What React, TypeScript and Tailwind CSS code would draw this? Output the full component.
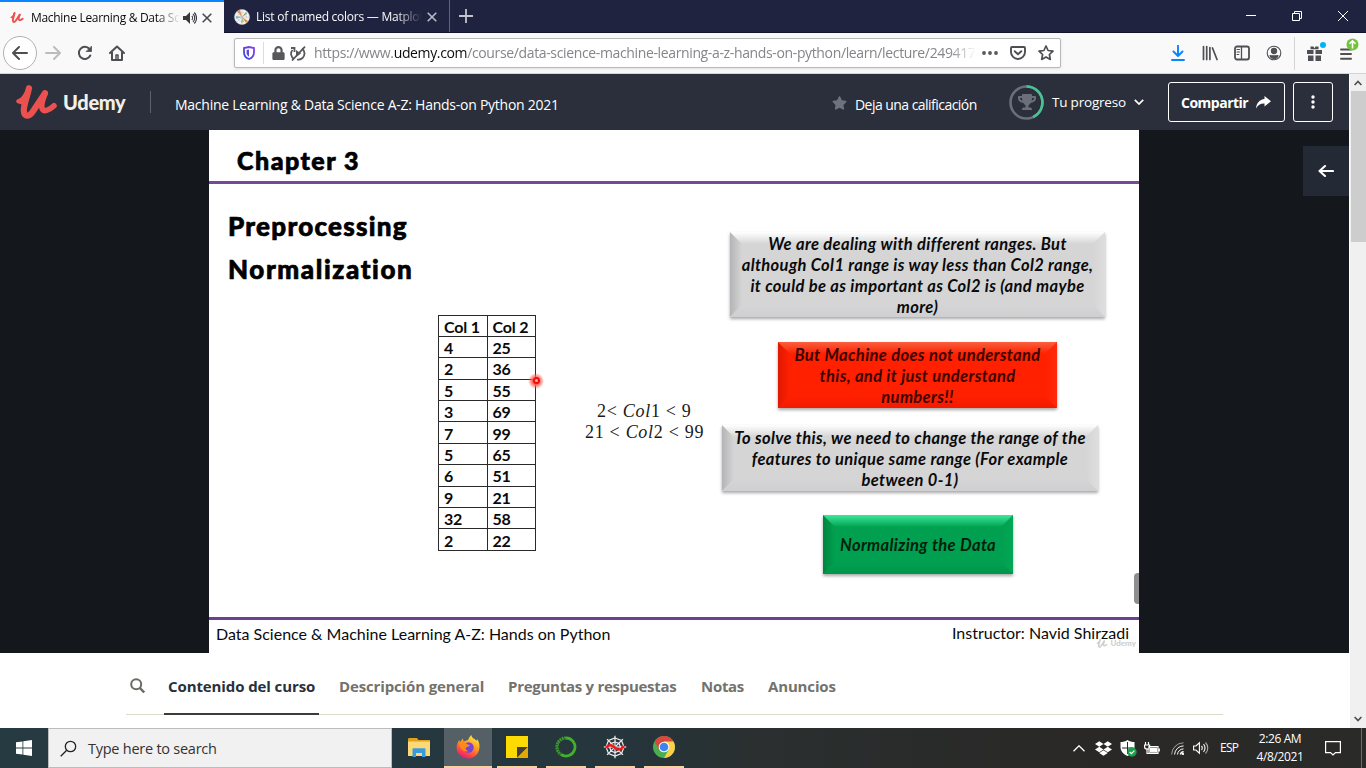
import React from "react";
import { FaStar, FaTrophy, FaLock, FaDropbox } from "react-icons/fa";

const sans = "font-['Open_Sans','Noto_Sans',sans-serif]";
const calibri = "font-['Lato','Noto_Sans',sans-serif]";

function UdemyMark({ className, color = "#eb524f" }: { className?: string; color?: string }) {
  return (
    <svg className={className} viewBox="0 0 41 34" fill="none" stroke={color} strokeLinecap="round" strokeLinejoin="round">
      <path d="M13 3.200C11.500 11 7.800 19 7.800 25.500C8 32.500 13 32 16.500 27L28.800 8.500" strokeWidth="6.200" />
      <path d="M29.200 8C27 14.500 24.800 19.500 26 23C27.500 27.500 33 25.500 38 20.800" strokeWidth="5.600" />
      <path d="M2.200 16.300C7 15 10.500 8.500 12.500 3.500L8 18z" strokeWidth="4" fill={color} />
    </svg>
  );
}

function Close({ className }: { className?: string }) {
  return (
    <svg className={className} width="10" height="10" viewBox="0 0 10 10" stroke="currentColor" strokeWidth="1.6">
      <path d="M.7.7l8.600 8.600M9.300.7L.7 9.300" />
    </svg>
  );
}

function TabBar() {
  return (
    <div className={`flex h-[33px] shrink-0 bg-[#20233f] border-b border-[#12142b] ${sans}`}>
      <div className="flex h-[33px] w-[224px] items-center border-t-2 border-[#0a84ff] bg-[#f9f9fa] pl-[10px]">
        <UdemyMark className="h-[11px] w-[14px]" />
        <div className="ml-[7px] w-[149px] overflow-hidden whitespace-nowrap text-[12px] tracking-[-0.3px] text-[#0c0c0d] [mask-image:linear-gradient(90deg,#000_84%,transparent)]">
          Machine Learning &amp; Data Science
        </div>
        <svg className="ml-[3px]" width="14" height="12" viewBox="0 0 14 12" fill="none">
          <path d="M0 4h3l4-4v12L3 8H0z" fill="#38383d" />
          <path d="M8.800 4c1 1 1 3 0 4M10 2c2.300 2 2.300 6 0 8M11.300.5c3 3 3 8 0 11" stroke="#38383d" strokeWidth="1.100" />
        </svg>
        <Close className="ml-[5px] text-[#4a4a4f]" />
      </div>
      <div className="flex w-[226px] items-center border-r border-[#60627a] pl-[10px] pt-[2px]">
        <svg width="16" height="16" viewBox="0 0 16 16">
          <circle cx="8" cy="8" r="7.500" fill="#f4f4f2" stroke="#c9ccd2" strokeWidth=".6" />
          <path d="M8 8L3 2l3-1z" fill="#e48740" />
          <path d="M8 8l6 4-2 2z" fill="#ec8b2e" />
          <path d="M8 8L2 7v3z" fill="#8db4c8" />
          <path d="M8 8l4-5 1 2z" fill="#7cae6a" />
          <path d="M8 8l-1 6 3-1z" fill="#a9c879" />
          <circle cx="8" cy="8" r="4.500" fill="none" stroke="#b0b5bb" strokeWidth=".4" />
          <path d="M8 .5v15M.5 8h15M2.700 2.700l10.600 10.600M13.300 2.700L2.700 13.300" stroke="#a7acb2" strokeWidth=".4" />
        </svg>
        <div className="ml-[6px] w-[166px] overflow-hidden whitespace-nowrap text-[12px] tracking-[-0.25px] text-[#f9f9fa] [mask-image:linear-gradient(90deg,#000_84%,transparent)]">
          List of named colors — Matplotlib
        </div>
        <Close className="ml-[5px] text-[#b9bac6]" />
      </div>
      <svg className="ml-[9px] mt-[9px]" width="14" height="14" viewBox="0 0 14 14" stroke="#c2c3cf" strokeWidth="1.800">
        <path d="M7 0v14M0 7h14" />
      </svg>
      <div className="ml-auto flex items-center text-white">
        <svg className="mr-[36px]" width="10" height="10" viewBox="0 0 10 10" stroke="currentColor"><path d="M0 4.500h10" /></svg>
        <svg className="mr-[36px]" width="10" height="10" viewBox="0 0 10 10" fill="none" stroke="currentColor"><path d="M.5 2.500h7v7h-7zM2.500 2.500v-2h7v7h-2" /></svg>
        <svg className="mr-[18px]" width="10" height="10" viewBox="0 0 10 10" stroke="currentColor"><path d="M0 0l10 10M10 0L0 10" /></svg>
      </div>
    </div>
  );
}

function Cell({ children }: { children: React.ReactNode }) {
  return <div className="relative flex h-8 w-8 shrink-0 items-center justify-center">{children}</div>;
}

function Icon({ children, size = 16, className, sw = 2 }: { children: React.ReactNode; size?: number; className?: string; sw?: number }) {
  return (
    <svg className={className} width={size} height={size} viewBox="0 0 16 16" fill="none" stroke="currentColor" strokeWidth={sw} strokeLinecap="round" strokeLinejoin="round">
      {children}
    </svg>
  );
}

function NavBar() {
  return (
    <div className={`flex h-[41px] shrink-0 items-center border-b border-[#d3d3d6] bg-[#f9f9fa] text-[#4f4f53] ${sans}`}>
      <div className="ml-[3px] flex h-[34px] w-[34px] items-center justify-center rounded-full border border-[#b1b1b3] bg-white">
        <Icon><path d="M1 8h14M7 2L1 8l6 6" /></Icon>
      </div>
      <Cell><Icon className="text-[#bcbcbe]"><path d="M1 8h14M9 2l6 6-6 6" /></Icon></Cell>
      <Cell>
        <Icon><path d="M13.300 10.500A6 6 0 1 1 12.500 4" /><path d="M14.500 1.500v5h-5z" fill="currentColor" strokeWidth=".8" /></Icon>
      </Cell>
      <Cell>
        <Icon><path d="M1 8l7-6.500L15 8M3 7.500V15h10V7.500" /><path d="M7 15v-5h2v5" strokeWidth="1.500" /></Icon>
      </Cell>
      <div className="ml-[101px] flex h-[30px] w-[827px] items-center rounded-[2px] border border-[#b9b9bc] bg-white shadow-[0_1px_3px_rgba(0,0,0,0.1)]">
        <svg className="ml-[8px]" width="12" height="14" viewBox="0 0 12 14" fill="none">
          <defs><linearGradient id="sh" x1="1" y1="0" x2="0" y2="1"><stop stopColor="#8a3ff0" /><stop offset="1" stopColor="#2b4fd0" /></linearGradient></defs>
          <path d="M6 1L1 2v4c0 3.500 2 6 5 7 3-1 5-3.500 5-7V2z" stroke="url(#sh)" strokeWidth="1.800" />
          <path d="M6 3.500L3.600 4v2.500C3.600 8.500 4.500 10 6 10.800z" fill="url(#sh)" />
        </svg>
        <div className="ml-[8px] h-[22px] w-px bg-[#dcdcde]" />
        <FaLock className="ml-[8px] h-[14px] w-[13px] text-[#58585b]" />
        <svg className="ml-[5px] text-[#58585b]" width="16" height="15" viewBox="0 0 16 15" fill="none" stroke="currentColor" strokeWidth="1.800">
          <path d="M4 13C1 11 0 7 2.500 4M12 2.500c3 2.500 3.500 6.500.5 9.500-1.500 1.300-3.500 2-5.500 1.500M1 2h3.500v4" />
          <path d="M6 4l5 3.500L6 11z" fill="currentColor" stroke="none" />
          <path d="M15 .7L2 14.500" />
        </svg>
        <div className="ml-[8px] w-[662px] overflow-hidden whitespace-nowrap text-[14px] leading-5 tracking-[-0.36px] text-[#85858a] [mask-image:linear-gradient(90deg,#000_96%,transparent)]">
          https://www.<span className="text-[#0c0c0d]">udemy.com</span>/course/data-science-machine-learning-a-z-hands-on-python/learn/lecture/249417
        </div>
        <svg className="ml-[6px]" width="16" height="4" viewBox="0 0 16 4" fill="#58585b"><circle cx="2" cy="2" r="1.900" /><circle cx="8" cy="2" r="1.900" /><circle cx="14" cy="2" r="1.900" /></svg>
        <Icon className="ml-[12px]" sw={1.9}><path d="M2 2h12c.6 0 1 .4 1 1v4a7 7 0 0 1-14 0V3c0-.6.4-1 1-1z" /><path d="M4.700 6.200L8 9.300l3.300-3.100" /></Icon>
        <Icon className="ml-[12px]" sw={1.700}><path d="M8 1l2.100 4.500 4.900.6-3.600 3.400.9 4.900L8 12l-4.300 2.400.9-4.900L1 6.100l4.900-.6z" /></Icon>
      </div>
      <div className="ml-auto flex items-center pr-[4px]">
        <Cell><Icon size={16} className="text-[#0a84ff]"><path d="M8 .5v10M3.500 6.500L8 11l4.500-4.500M2 15h12" strokeWidth="1.900" /></Icon></Cell>
        <Cell><Icon sw={1.7}><path d="M1.500 1.500v13M4.700 1.500v13M7.900 2.500v12M10.500 3l4.500 11.500" /></Icon></Cell>
        <Cell><Icon sw={1.800}><rect x="1" y="1.500" width="14" height="13" rx="2" /><path d="M7.500 2v12" strokeWidth="1.300" /><path d="M3 4.500h2.500M3 7h2.500M3 9.500h1.800" strokeWidth="1" /></Icon></Cell>
        <Cell>
          <Icon sw={1.1}><circle cx="8" cy="8" r="6.800" /><circle cx="8" cy="6" r="2.600" fill="currentColor" /><path d="M4 10.500c1 .5 7 .5 8 0-.5 2-2 3-4 3s-3.500-1-4-3z" fill="currentColor" /></Icon>
        </Cell>
        <div className="ml-[4px] mr-[3px] h-[33px] w-px bg-[#d5d5d8]" />
        <Cell>
          <svg width="15" height="15" viewBox="0 0 15 15" fill="#4f4f53"><path d="M0 4h6.500v4H0zM8.500 4H15v4H8.500zM1 9.500h5.500V15H1zM8.500 9.500H14V15H8.500zM3.500.5h3l1 2 1-2h3v2.800h-8z" /></svg>
          <div className="absolute right-[4px] top-[5px] h-[6px] w-[6px] rounded-full bg-[#00b3f4]" />
        </Cell>
        <Cell>
          <svg className="mt-[2px]" width="12" height="12" viewBox="0 0 12 12" stroke="#4f4f53" strokeWidth="2" strokeLinecap="round"><path d="M1 1.500h10M1 6h10M1 10.700h10" /></svg>
          <svg className="absolute left-[16px] top-[1px]" width="13" height="13" viewBox="0 0 13 13" fill="none"><circle cx="6.500" cy="6.500" r="6" fill="#73c23c" /><path d="M6.500 10.500V3M3.500 5.800l3-3 3 3" stroke="#fff" strokeWidth="1.600" /></svg>
        </Cell>
      </div>
    </div>
  );
}

function CourseHeader() {
  return (
    <div className={`flex h-[56px] shrink-0 items-center bg-[#2a2f3b] text-white ${sans}`}>
      <UdemyMark className="ml-[16px] h-[34px] w-[41px]" />
      <div className="ml-[6px] w-[62px] whitespace-nowrap font-['Lato'] text-[20px] font-black leading-6 tracking-[-0.3px] text-[#f3efe8]">Udemy</div>
      <div className="ml-[25px] h-[22px] w-px bg-[#5d626c]" />
      <div className="ml-[24px] mt-[5px] whitespace-nowrap text-[14px] tracking-[-0.25px]">Machine Learning &amp; Data Science A-Z: Hands-on Python 2021</div>
      <div className="ml-auto flex items-center pr-[16px]">
        <FaStar className="mt-[2px] h-[14px] w-[15px] text-[#6d727d]" />
        <div className="ml-[8px] mt-[4px] w-[122px] whitespace-nowrap text-[14px] tracking-[-0.54px]">Deja una calificación</div>
        <div className="relative ml-[32px] flex h-[35px] w-[35px] items-center justify-center">
          <svg className="absolute inset-0" width="35" height="35" viewBox="0 0 35 35" fill="none" strokeWidth="2.600">
            <circle cx="17.500" cy="17.500" r="16" stroke="#6a6f7a" />
            <path d="M17.500 1.500A16 16 0 0 1 24 32.100" stroke="#46c492" />
          </svg>
          <FaTrophy className="h-[16px] w-[18px] text-[#6a6f7a]" />
        </div>
        <div className="ml-[8px] w-[75px] whitespace-nowrap text-[13.500px] tracking-[-0.2px]">Tu progreso</div>
        <svg className="ml-[7px]" width="10" height="6" viewBox="0 0 10 6" fill="none" stroke="#fff" strokeWidth="1.700"><path d="M.8.8L5 5 9.200.8" /></svg>
        <div className="ml-[24px] flex h-[40px] w-[117px] items-center rounded-[3px] border border-white pl-[12px] text-[14px] font-bold">
          <span className="w-[67px] whitespace-nowrap tracking-[-0.5px]">Compartir</span>
          <svg className="ml-[8px]" width="15" height="13" viewBox="0 0 15 13" fill="#fff"><path d="M8.500 0L15 5.200 8.500 10.500V7.500C4.500 7.300 2 9 0 12.500 .5 7 3.500 3.500 8.500 3z" /></svg>
        </div>
        <div className="ml-[8px] flex h-[40px] w-[40px] items-center justify-center rounded-[3px] border border-white">
          <svg width="4" height="14" viewBox="0 0 4 14" fill="#fff"><circle cx="2" cy="2" r="1.700" /><circle cx="2" cy="7" r="1.700" /><circle cx="2" cy="12" r="1.700" /></svg>
        </div>
      </div>
    </div>
  );
}

type Tone = { id: string; base: string; top: string; topEnd: string; left: string; right: string; bottom: string };
const gray: Tone = { id: "g", base: "#d5d5d6", top: "#ffffff", topEnd: "#d5d5d6", left: "#b4b4b6", right: "#dededf", bottom: "#cfcfd1" };
const red: Tone = { id: "r", base: "#ff2000", top: "#f9603f", topEnd: "#ff2000", left: "#e01800", right: "#ff2a0c", bottom: "#f31a00" };
const green: Tone = { id: "n", base: "#00a050", top: "#3ee899", topEnd: "#00a352", left: "#008540", right: "#02a756", bottom: "#00964a" };

function Bevel({ w, h, tone, lines, className }: { w: number; h: number; tone: Tone; lines: string[]; className: string }) {
  const b = 12;
  const stops = (name: string, from: string, to: string, dir: string) => (
    <linearGradient id={tone.id + name + w} x1={dir === "l" ? 1 : 0} y1={dir === "u" ? 1 : 0} x2={dir === "r" ? 1 : 0} y2={dir === "d" ? 1 : 0}>
      <stop stopColor={to} /><stop offset="1" stopColor={from} />
    </linearGradient>
  );
  return (
    <div className={`relative flex shrink-0 flex-col items-center justify-center pt-[2px] shadow-[0_2px_3px_rgba(0,0,0,0.35)] ${className}`}>
      <svg className="absolute inset-0" width={w} height={h} viewBox={`0 0 ${w} ${h}`}>
        <defs>
          {stops("t", tone.topEnd, tone.top, "d")}
          {stops("l", tone.base, tone.left, "r")}
          {stops("r", tone.base, tone.right, "l")}
          {stops("b", tone.base, tone.bottom, "u")}
        </defs>
        <rect width={w} height={h} fill={tone.base} />
        <polygon points={`0,0 ${b},${b} ${b},${h - b} 0,${h}`} fill={`url(#${tone.id}l${w})`} />
        <polygon points={`${w},0 ${w - b},${b} ${w - b},${h - b} ${w},${h}`} fill={`url(#${tone.id}r${w})`} />
        <polygon points={`0,${h} ${b},${h - b} ${w - b},${h - b} ${w},${h}`} fill={`url(#${tone.id}b${w})`} />
        <polygon points={`0,0 ${b},${b} ${w - b},${b} ${w},0`} fill={`url(#${tone.id}t${w})`} />
      </svg>
      {lines.map((l) => (
        <div key={l} className="relative whitespace-nowrap text-[16.500px] font-bold italic leading-[21px] tracking-[0.36px]">{l}</div>
      ))}
    </div>
  );
}

const rows = [["Col 1", "Col 2"], ["4", "25"], ["2", "36"], ["5", "55"], ["3", "69"], ["7", "99"], ["5", "65"], ["6", "51"], ["9", "21"], ["32", "58"], ["2", "22"]];

function Slide() {
  return (
    <div className={`relative flex w-[930px] shrink-0 flex-col bg-white text-[#0a0a0a] ${calibri}`}>
      <div className="flex h-[54px] shrink-0 items-center border-b-[3px] border-[#74489a] pl-[28px] pt-[9px] text-[25px] font-black leading-8 tracking-[1.500px] text-black [-webkit-text-stroke:0.7px_#000]">Chapter 3</div>
      <div className="flex h-[433px] shrink-0">
        <div className="w-[229px] pl-[19px] pt-[21px] text-[26px] font-black leading-[43px] text-black [-webkit-text-stroke:0.7px_#000]">
          <div className="whitespace-nowrap tracking-[1.250px]">Preprocessing</div>
          <div className="whitespace-nowrap tracking-[1.600px]">Normalization</div>
        </div>
        <div className="relative mt-[130.500px] h-[237px] w-[98px] shrink-0">
          <div className="grid grid-cols-2 border-l-[1.500px] border-t-[1.500px] border-[#2a2a2a]">
            {rows.flat().map((c, i) => (
              <div key={i} className="flex h-[21.400px] items-center whitespace-nowrap border-b-[1.500px] border-r-[1.500px] border-[#2a2a2a] pl-[5px] pt-[2px] text-[16px] font-bold tracking-[-0.2px]">{c}</div>
            ))}
          </div>
          <div className="absolute left-[90px] top-[58px] flex h-[16px] w-[16px] items-center justify-center rounded-full bg-[radial-gradient(circle,#ff6050_30%,rgba(255,110,90,0)_72%)]">
            <div className="h-[7px] w-[7px] rounded-full border-2 border-[#f01010] bg-[#ffb0a0]" />
          </div>
        </div>
        <div className="w-[177px] pt-[217px] font-['Liberation_Serif',serif] text-[18px] leading-[20.500px] tracking-[0.700px] text-[#1b1b1b]">
          <div className="whitespace-nowrap pl-[61px]">2&lt; <i>Col</i>1 &lt; 9</div>
          <div className="whitespace-nowrap pl-[49px]">21 &lt; <i>Col</i>2 &lt; 99</div>
        </div>
        <div className="flex flex-col">
          <Bevel w={375} h={85} tone={gray} className="ml-[17px] mt-[48px] h-[85px] w-[375px]" lines={["We are dealing with different ranges. But", "although Col1 range is way less than Col2 range,", "it could be as important as Col2 is (and maybe", "more)"]} />
          <Bevel w={279} h={66} tone={red} className="ml-[65px] mt-[25px] h-[66px] w-[279px] text-[#3a0500]" lines={["But Machine does not understand", "this, and it just understand", "numbers!!"]} />
          <Bevel w={376} h={66} tone={gray} className="ml-[9px] mt-[17px] h-[66px] w-[376px]" lines={["To solve this, we need to change the range of the", "features to unique same range (For example", "between 0-1)"]} />
          <Bevel w={190} h={59} tone={green} className="ml-[110px] mt-[24px] h-[59px] w-[190px] text-[#00200c]" lines={["Normalizing the Data"]} />
        </div>
      </div>
      <div className="flex flex-1 justify-between border-t-[3px] border-[#6b3f94] pl-[7px] pr-[10px] pt-px text-[16px] leading-6">
        <div className="pt-px">Data Science &amp; Machine Learning A-Z: Hands on Python</div>
        <div>Instructor: Navid Shirzadi</div>
      </div>
      <div className="absolute right-0 top-[443px] h-[31px] w-[5px] rounded-l-[4px] bg-[#8e8e90]" />
      <div className="absolute bottom-[4px] right-[3px] flex items-center gap-[2px] text-[8px] font-black leading-3 text-[#cfcfd1]">
        <UdemyMark className="h-[9px] w-[12px]" color="#cfcfd1" />Udemy
      </div>
    </div>
  );
}

function Video() {
  return (
    <div className="flex h-[523px] shrink-0 bg-[#14171c]">
      <div className="w-[209px]" />
      <Slide />
      <div className="ml-auto mt-[16px] flex h-[50px] w-[46px] items-center justify-center bg-[#242a35] text-white">
        <Icon sw={2.100}><path d="M1.500 8H15M7 3L1.500 8 7 13" /></Icon>
      </div>
    </div>
  );
}

const tabs = [
  { t: "Contenido del curso", c: "ml-[19px] w-[155px] pl-[4px] border-b-2 border-[#3c3b37] text-[#29303b] tracking-[-0.1px]" },
  { t: "Descripción general", c: "ml-[20px] w-[145px] text-[#73726c] tracking-[-0.14px]" },
  { t: "Preguntas y respuestas", c: "ml-[24px] w-[168px] text-[#73726c] tracking-[-0.27px]" },
  { t: "Notas", c: "ml-[25px] w-[43px] text-[#73726c] tracking-[-0.3px]" },
  { t: "Anuncios", c: "ml-[24px] w-[69px] text-[#73726c] tracking-[-0.15px]" },
];

function CourseTabs() {
  return (
    <div className={`flex-1 bg-white pl-[126px] ${sans}`}>
      <div className="h-[62px] w-[1097px] border-b border-[#dcdacb]">
        <div className="flex h-[62px]">
          <svg className="ml-[4px] mt-[25px]" width="15" height="16" viewBox="0 0 15 16" fill="none" stroke="#6b6a65" strokeWidth="2"><circle cx="6.200" cy="6.200" r="5" /><path d="M9.800 10l4.400 4.500" strokeWidth="2.400" /></svg>
          {tabs.map((x) => (
            <div key={x.t} className={`whitespace-nowrap pt-[21px] text-[15px] font-bold leading-6 ${x.c}`}>{x.t}</div>
          ))}
        </div>
      </div>
    </div>
  );
}

function ScrollBar() {
  return (
    <div className="flex w-[17px] flex-col items-center border-l border-white bg-[#f0f0f0]">
      <svg className="mt-[6px]" width="8" height="6" viewBox="0 0 8 6" fill="none" stroke="#505050" strokeWidth="1.700"><path d="M.6 5L4 1.500 7.400 5" /></svg>
      <div className="mt-[5px] h-[151px] w-[15px] bg-[#cdcdcd]" />
      <svg className="mb-[6px] mt-auto" width="8" height="6" viewBox="0 0 8 6" fill="none" stroke="#505050" strokeWidth="1.700"><path d="M.6 1L4 4.500 7.400 1" /></svg>
    </div>
  );
}

function TaskApp({ children, cell = "w-[49px]", bar = "w-[40px]" }: { children: React.ReactNode; cell?: string; bar?: string }) {
  return (
    <div className={`flex h-[40px] flex-col items-center ${cell}`}>
      <div className="flex h-[38px] items-center justify-center">{children}</div>
      <div className={`h-[2px] bg-[#f8d0a3] ${bar}`} />
    </div>
  );
}

const spokes = [0, 45, 90, 135, 180, 225, 270, 315];

function TaskBar() {
  return (
    <div className="flex h-[40px] shrink-0 bg-[linear-gradient(90deg,#263a42,#25363d_45%,#2a2f2f_55%,#292826_80%,#2a2a28)] font-['Open_Sans','Noto_Sans',sans-serif]">
      <div className="flex w-[48px] items-center justify-center">
        <svg width="16" height="16" viewBox="0 0 16 16" fill="#fff"><path d="M0 2.300l6.500-.9v6.100H0zM7.300 1.300L16 0v7.500H7.300zM0 8.400h6.500v6.200L0 13.700zM7.300 8.400H16V16l-8.700-1.300z" /></svg>
      </div>
      <div className="flex w-[344px] items-center border border-[#bcbcbc] bg-[#f1f1f1] pl-[11px]">
        <svg width="17" height="17" viewBox="0 0 17 17" fill="none" stroke="#222" strokeWidth="1.300"><circle cx="10.500" cy="6.500" r="5.200" /><path d="M6.700 10.200L.7 16.200" /></svg>
        <div className="ml-[11px] mt-[2px] whitespace-nowrap text-[14.500px] tracking-[-0.25px] text-[#333]">Type here to search</div>
      </div>
      <div className="ml-[3px] flex">
        <TaskApp bar="w-0">
          <svg className="-ml-px" width="22" height="19" viewBox="0 0 22 19"><path d="M0 1.500C0 .7.5 0 1.300 0H9l1.500 2H22v16H0z" fill="#e0a21b" /><path d="M0 3.500h22V18H0z" fill="#fbd976" /><path d="M4.500 19v-7.500c0-.8.5-1.300 1.300-1.300h10.400c.8 0 1.300.5 1.300 1.300V19H14v-4H8v4z" fill="#3a9ade" /></svg>
        </TaskApp>
        <TaskApp cell="w-[48px] bg-[#556066]" bar="w-[48px]">
          <svg width="24" height="24" viewBox="0 0 24 24">
            <defs><linearGradient id="ff" x1=".8" y1="0" x2=".3" y2="1"><stop stopColor="#fff04a" /><stop offset=".4" stopColor="#ffa21e" /><stop offset=".75" stopColor="#ff4a3e" /><stop offset="1" stopColor="#e31586" /></linearGradient></defs>
            <path d="M15.500 0c-.5 3 4.500 4 5 6l.5-2c2.300 3 2.800 6 2.400 9-.6 6-5.400 10.500-11.400 10.500S.8 19 .6 13c0-4 1.400-6 2.600-8L4 7l3-3.500.5 3L12 5c1-2 1.800-4 3.500-5z" fill="url(#ff)" />
            <circle cx="12.500" cy="12.500" r="5.200" fill="#7445d8" />
            <path d="M3 8c3-2.500 6-1 8 1 1 .8 2 .8 3 1-1 2-3 1.500-4 2.500s0 3 2.500 3.500C8 18 4 14 3 8z" fill="#ff8a1c" />
          </svg>
        </TaskApp>
        <TaskApp>
          <svg width="22" height="22" viewBox="0 0 22 22"><path d="M0 0h22v22H0z" fill="#fedb00" /><path d="M11 22V11h11z" fill="#404040" /><path d="M11 22l11-11v11z" fill="#e6a800" /></svg>
        </TaskApp>
        <TaskApp>
          <svg width="22" height="22" viewBox="0 0 22 22" fill="none" stroke="#43b02a"><path d="M11 2a9 9 0 1 1-5 16.500" strokeWidth="2.800" /><path d="M11 2a9 9 0 0 0-5 16.500" strokeWidth="3.200" strokeDasharray="1.800 .6" strokeOpacity=".8" /></svg>
        </TaskApp>
        <TaskApp>
          <svg width="24" height="24" viewBox="0 0 24 24" fill="none" stroke="#eee" strokeWidth="1.200">
            {spokes.map((a) => <path key={a} d="M12 12V.8" transform={`rotate(${a} 12 12)`} />)}
            <path d="M12 3l6.500 2.500L21 12l-2.500 6.500L12 21l-6.500-2.500L3 12l2.500-6.500zM12 7l4 1.500 1.500 3.500-1.500 4-4 1.500-4-1.500L6.500 12 8 8.500z" />
            <path d="M3 13c2-3 5-4 8-1s6 4 10-1" stroke="#f01818" strokeWidth="2.600" />
          </svg>
        </TaskApp>
        <TaskApp>
          <svg width="22" height="22" viewBox="0 0 22 22">
            <circle cx="11" cy="11" r="11" fill="#4aae50" />
            <path d="M11 11L1.500 5.500A11 11 0 0 1 20.500 5.500z" fill="#d8483b" />
            <path d="M11 5.500h9.500A11 11 0 0 1 11 22l4.700-8.300z" fill="#fcd04a" />
            <path d="M1.500 5.500L6.300 13.700 11 11 11 5.500z" fill="#d8483b" />
            <circle cx="11" cy="11" r="5.300" fill="#fff" /><circle cx="11" cy="11" r="4.300" fill="#3f83f0" />
          </svg>
        </TaskApp>
      </div>
      <div className="ml-auto flex items-center text-white">
        <svg width="12" height="7" viewBox="0 0 12 7" fill="none" stroke="currentColor" strokeWidth="1.300"><path d="M.5 6.200L6 .8l5.500 5.400" /></svg>
        <FaDropbox className="ml-[10px] h-[17px] w-[17px]" />
        <svg className="ml-[8px]" width="17" height="17" viewBox="0 0 17 17"><path d="M7.500 0C5.500 1.500 3 2 .5 2v5c0 4.500 3 7 7 9 4-2 7-4.500 7-9V2c-2.500 0-5-.5-7-2z" fill="#fff" /><path d="M7.500 2v6h5.500M7.500 14V8H2" stroke="#292826" strokeWidth="1" fill="none" /><circle cx="12" cy="12" r="4.700" fill="#18a04a" /><path d="M9.700 12l1.700 1.700 3-3" stroke="#fff" strokeWidth="1.200" fill="none" /></svg>
        <svg className="ml-[7px]" width="16" height="13" viewBox="0 0 16 13" fill="none" stroke="currentColor" strokeWidth="1.200"><path d="M5 4.500h9v6.800H5zM15.300 6.500v3M1.500 0v3M4.500 0v3M.6 3h5v2c0 1.500-1 2-2.500 2S.6 6.500.6 5zM3 7v4.500h2" /><path d="M6.500 6h6v3.800h-6z" fill="currentColor" /></svg>
        <svg className="ml-[11px]" width="13" height="13" viewBox="0 0 13 13" fill="none" stroke="currentColor"><path d="M.6 12.500A12 12 0 0 1 12.500.8" strokeOpacity=".55" /><path d="M3.600 12.500a9 9 0 0 1 9-8.600M6.500 12.500a6 6 0 0 1 6-5.600" /><path d="M9.300 12.500a3 3 0 0 1 3.300-2.800" strokeWidth="1.300" /><circle cx="11.800" cy="11.800" r="1" fill="currentColor" /></svg>
        <svg className="ml-[9px]" width="17" height="14" viewBox="0 0 17 14" fill="none" stroke="currentColor" strokeWidth="1.100"><path d="M.6 5h2.300L6.400 1.800v10.400L2.900 9H.6z" /><path d="M8.500 5c1 1 1 3 0 4M10.500 3.200c2 2 2 5.600 0 7.600" /><path d="M12.500 1.500c3 3 3 8 0 11" strokeOpacity=".6" /></svg>
        <div className="ml-[10px] w-[19px] text-[12px] tracking-[-0.7px]">ESP</div>
        <div className="ml-[16px] w-[50px] whitespace-nowrap text-center text-[12px] leading-[18px] tracking-[-0.4px]">
          <div>2:26 AM</div>
          <div>4/8/2021</div>
        </div>
        <svg className="ml-[20px] mr-[20px]" width="16" height="16" viewBox="0 0 16 16" fill="none" stroke="currentColor" strokeWidth="1.200"><path d="M.6 1.600h14.800v11H10.500L8 15l-2.500-2.400H.6z" /></svg>
        <div className="mr-[4px] h-[40px] w-px bg-[#6d6d6b]" />
      </div>
    </div>
  );
}

export default function App() {
  return (
    <div className="flex h-[768px] w-[1366px] flex-col overflow-hidden bg-white">
      <TabBar />
      <NavBar />
      <div className="flex h-[654px] shrink-0">
        <div className="flex w-[1349px] flex-col">
          <CourseHeader />
          <Video />
          <CourseTabs />
        </div>
        <ScrollBar />
      </div>
      <TaskBar />
    </div>
  );
}
